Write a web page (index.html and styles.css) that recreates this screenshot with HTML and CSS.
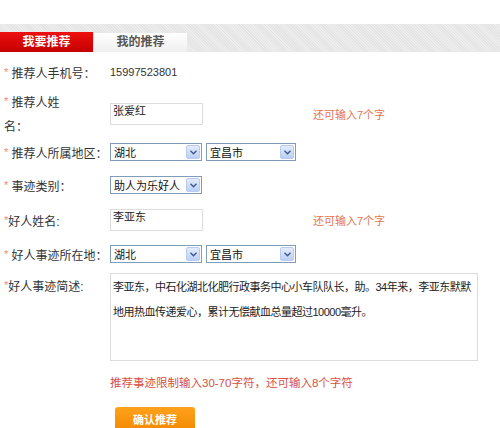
FILE: index.html
```html
<!DOCTYPE html>
<html lang="zh-CN">
<head>
    <meta charset="UTF-8">
    <title>我要推荐</title>
    <link rel="stylesheet" href="styles.css">
</head>
<body>
    <div class="tab-bar">
        <a class="tab tab-active">我要推荐</a>
        <a class="tab">我的推荐</a>
    </div>

    <div class="form">
        <div class="row row-phone">
            <div class="label"><span class="star">*</span> 推荐人手机号：</div>
            <div class="field phone">15997523801</div>
        </div>

        <div class="row row-name">
            <div class="label label-wrap"><span class="star">*</span> 推荐人姓<br>名：</div>
            <div class="field">
                <input class="text-input" type="text" value="张爱红">
                <span class="count">还可输入7个字</span>
            </div>
        </div>

        <div class="row row-area">
            <div class="label"><span class="star">*</span> 推荐人所属地区：</div>
            <div class="field">
                <div class="select sel-prov"><span>湖北</span><i class="arrow"><svg width="7" height="5" viewBox="0 0 7 5"><path d="M0.5 0.8 L3.5 3.8 L6.5 0.8" fill="none" stroke="#3f5a8c" stroke-width="1.4"/></svg></i></div>
                <div class="select sel-city"><span>宜昌市</span><i class="arrow"><svg width="7" height="5" viewBox="0 0 7 5"><path d="M0.5 0.8 L3.5 3.8 L6.5 0.8" fill="none" stroke="#3f5a8c" stroke-width="1.4"/></svg></i></div>
            </div>
        </div>

        <div class="row row-type">
            <div class="label"><span class="star">*</span> 事迹类别：</div>
            <div class="field">
                <div class="select sel-prov"><span>助人为乐好人</span><i class="arrow"><svg width="7" height="5" viewBox="0 0 7 5"><path d="M0.5 0.8 L3.5 3.8 L6.5 0.8" fill="none" stroke="#3f5a8c" stroke-width="1.4"/></svg></i></div>
            </div>
        </div>

        <div class="row row-good">
            <div class="label"><span class="star">*</span>好人姓名:</div>
            <div class="field">
                <input class="text-input" type="text" value="李亚东">
                <span class="count">还可输入7个字</span>
            </div>
        </div>

        <div class="row row-place">
            <div class="label"><span class="star">*</span> 好人事迹所在地：</div>
            <div class="field">
                <div class="select sel-prov"><span>湖北</span><i class="arrow"><svg width="7" height="5" viewBox="0 0 7 5"><path d="M0.5 0.8 L3.5 3.8 L6.5 0.8" fill="none" stroke="#3f5a8c" stroke-width="1.4"/></svg></i></div>
                <div class="select sel-city"><span>宜昌市</span><i class="arrow"><svg width="7" height="5" viewBox="0 0 7 5"><path d="M0.5 0.8 L3.5 3.8 L6.5 0.8" fill="none" stroke="#3f5a8c" stroke-width="1.4"/></svg></i></div>
            </div>
        </div>

        <div class="row row-desc">
            <div class="label"><span class="star">*</span>好人事迹简述:</div>
            <div class="field">
                <textarea class="desc">李亚东，中石化湖北化肥行政事务中心小车队队长，助。34年来，李亚东默默地用热血传递爱心，累计无偿献血总量超过10000毫升。</textarea>
            </div>
        </div>

        <div class="row row-hint">
            <div class="label"></div>
            <div class="field hint">推荐事迹限制输入30-70字符，还可输入8个字符</div>
        </div>

        <div class="row row-submit">
            <div class="label"></div>
            <div class="field">
                <button class="submit">确认推荐</button>
            </div>
        </div>
    </div>
</body>
</html>
```

FILE: styles.css
```css
body {
    margin: 0;
    font-family: "Liberation Sans", "Noto Sans CJK SC", sans-serif;
    font-size: 12px;
    color: #333;
    background: #fff;
}
.tab-bar {
    margin-top: 24px;
    height: 28px;
    display: flex;
    align-items: flex-end;
    background-color: #eaeaea;
    background-image: repeating-linear-gradient(45deg, #e4e4e4 0, #e4e4e4 1px, #ededed 1px, #ededed 2px);
}
.tab {
    width: 93px;
    height: 19px;
    line-height: 19px;
    text-align: center;
    font-weight: bold;
    font-size: 12px;
    color: #555;
    background: linear-gradient(#ffffff, #efefef);
}
.tab-active {
    height: 20px;
    line-height: 20px;
    color: #fff;
    background: linear-gradient(#ee1010, #c40000);
    margin-right: 1px;
}
.form {
    display: flex;
    flex-direction: column;
}
.row {
    display: flex;
    align-items: center;
}
.label {
    width: 106px;
    padding-left: 4px;
    flex-shrink: 0;
    color: #333;
}
.star {
    color: #f08a6a;
    font-size: 11px;
    vertical-align: 2px;
}
.field {
    display: flex;
    align-items: center;
}
.row-phone { height: 40px; }
.phone { font-size: 11px; }
.row-name { height: 44px; }
.label-wrap { line-height: 24px; }
.row-area { height: 32px; }
.row-type { height: 34px; }
.row-good { height: 36px; }
.row-place { height: 32px; }
.row-desc {
    align-items: flex-start;
    margin-top: 3px;
}
.row-desc .label { line-height: 24px; }
.row-hint {
    margin-top: 11px;
    height: 20px;
}
.row-submit { margin-top: 15px; }

.text-input {
    box-sizing: border-box;
    width: 93px;
    height: 22px;
    margin: 0;
    padding: 0 2px 9px 2px;
    border: 1px solid #dcdcdc;
    font-family: "Liberation Sans", "Noto Sans CJK SC", sans-serif;
    font-size: 11px;
    color: #222;
    outline: none;
}
.count {
    margin-left: 110px;
    color: #e5734f;
    font-size: 11px;
}
.select {
    box-sizing: border-box;
    height: 18px;
    border: 1px solid #7f9db9;
    display: flex;
    align-items: center;
    justify-content: space-between;
    padding: 0 1px 0 3px;
    font-size: 11px;
    color: #111;
    background: #fff;
}
.sel-prov { width: 92px; }
.sel-city { width: 90px; margin-left: 4px; }
.arrow {
    box-sizing: border-box;
    width: 14px;
    height: 14px;
    border: 1px solid #b7cbf3;
    border-radius: 2px;
    background: linear-gradient(#e4ecfd, #bccff6);
    display: flex;
    align-items: center;
    justify-content: center;
}
.desc {
    box-sizing: border-box;
    width: 368px;
    height: 88px;
    margin: 0;
    padding: 1px 2px 0 2px;
    border: 1px solid #dcdcdc;
    font-family: "Liberation Sans", "Noto Sans CJK SC", sans-serif;
    font-size: 11px;
    letter-spacing: -0.5px;
    line-height: 25px;
    color: #222;
    resize: none;
    outline: none;
}
.hint {
    color: #d9503f;
    font-size: 11.5px;
}
.submit {
    margin-left: 5px;
    width: 80px;
    height: 24px;
    border: none;
    border-radius: 3px;
    background: linear-gradient(#ffa11c, #f38a00);
    color: #fff;
    font-weight: bold;
    font-family: "Liberation Sans", "Noto Sans CJK SC", sans-serif;
    font-size: 11px;
}
```
